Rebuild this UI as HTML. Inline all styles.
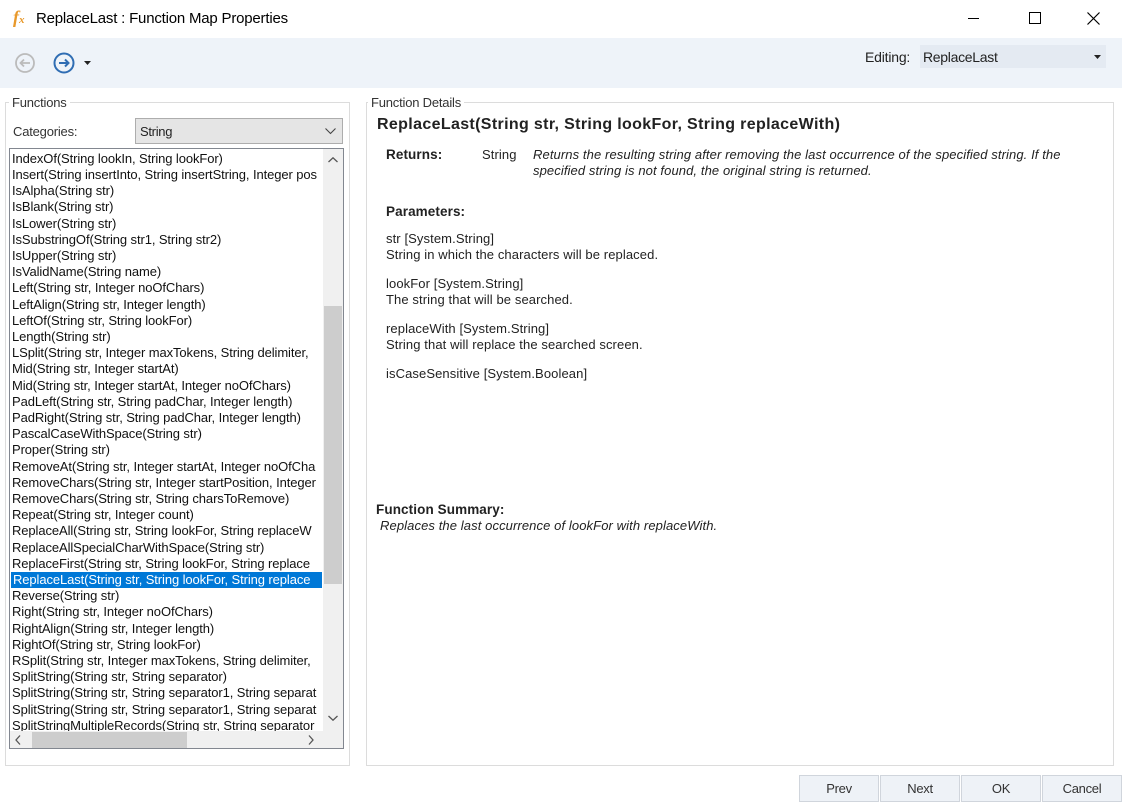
<!DOCTYPE html>
<html><head><style>
*{box-sizing:border-box;margin:0;padding:0}
body{width:1122px;height:802px;background:#fff;font-family:"Liberation Sans",sans-serif;color:#000;position:relative;overflow:hidden}
.a{position:absolute;white-space:nowrap}
.tb{left:0;top:38px;width:1122px;height:50px;background:#eef3f9}
.grp{border:1px solid #dcdcdc}
.lg{background:#fff;padding:0 3px;font-size:13px;color:#333;letter-spacing:-0.2px}
.list{left:9px;top:148px;width:335px;height:601px;border:1px solid #828790;background:#fff;overflow:hidden}
.it{position:absolute;left:2px;font-size:13px;letter-spacing:-0.1px;height:16px;line-height:16px;color:#111}
.sel{background:#0078d7;color:#fff;width:311px;padding-left:2px;left:1px;overflow:hidden}
.btn{top:775px;height:27px;width:80px;background:#eef2f7;border:1px solid #d0d5dc;font-size:13px;color:#333;text-align:center;line-height:26px;letter-spacing:-0.3px}
.d{font-size:13px;letter-spacing:0.1px;color:#222}
.it2{font-size:13px;font-style:italic;letter-spacing:0.1px;color:#222}
</style></head><body>
<div class="a" style="left:13px;top:7px;font-family:'Liberation Serif',serif;font-style:italic;font-weight:bold;color:#e8992b;font-size:18px">f<span style="font-size:11px">x</span></div>
<div class="a" style="left:36px;top:10px;font-size:15px;letter-spacing:-0.2px">ReplaceLast : Function Map Properties</div>
<div class="a" style="left:968px;top:18px;width:11px;height:1px;background:#000"></div>
<div class="a" style="left:1029px;top:12px;width:12px;height:12px;border:1px solid #000"></div>
<svg class="a" style="left:1087px;top:12px" width="13" height="13"><path d="M0.5 0.5L12.5 12.5M12.5 0.5L0.5 12.5" stroke="#000" stroke-width="1.2"/></svg>
<div class="a tb"></div>
<svg class="a" style="left:14px;top:52px" width="22" height="22"><circle cx="11" cy="11" r="9" fill="none" stroke="#bbb" stroke-width="1.8"/><path d="M16 11H6.5M10 7.5L6.5 11L10 14.5" fill="none" stroke="#bbb" stroke-width="1.8"/></svg>
<svg class="a" style="left:52px;top:51px" width="24" height="24"><circle cx="12" cy="12" r="9.5" fill="none" stroke="#2f6db3" stroke-width="2"/><path d="M7 12H16.5M13 8.5L16.5 12L13 15.5" fill="none" stroke="#2f6db3" stroke-width="2"/></svg>
<svg class="a" style="left:84px;top:61px" width="7" height="4"><path d="M0 0H7L3.5 4Z" fill="#222"/></svg>
<div class="a" style="left:865px;top:49px;font-size:14px;color:#222;letter-spacing:-0.2px">Editing:</div>
<div class="a" style="left:920px;top:45px;width:186px;height:23px;background:#e4eaf2"></div>
<div class="a" style="left:923px;top:49px;font-size:14px;color:#222;letter-spacing:-0.3px">ReplaceLast</div>
<svg class="a" style="left:1094px;top:55px" width="7" height="4"><path d="M0 0H7L3.5 4Z" fill="#222"/></svg>
<div class="a grp" style="left:5px;top:102px;width:345px;height:664px"></div>
<div class="a lg" style="left:9px;top:95px">Functions</div>
<div class="a" style="left:13px;top:124px;font-size:13px;color:#333;letter-spacing:-0.2px">Categories:</div>
<div class="a" style="left:135px;top:118px;width:208px;height:26px;background:#e5e5e5;border:1px solid #adadad"></div>
<div class="a" style="left:140px;top:124px;font-size:13px;color:#222;letter-spacing:-0.3px">String</div>
<svg class="a" style="left:325px;top:128px" width="11" height="7"><path d="M0.5 0.5L5.5 5.5L10.5 0.5" fill="none" stroke="#444" stroke-width="1.1"/></svg>
<div class="a list">
<div class="it" style="top:2px">IndexOf(String lookIn, String lookFor)</div>
<div class="it" style="top:18px">Insert(String insertInto, String insertString, Integer pos</div>
<div class="it" style="top:34px">IsAlpha(String str)</div>
<div class="it" style="top:50px">IsBlank(String str)</div>
<div class="it" style="top:67px">IsLower(String str)</div>
<div class="it" style="top:83px">IsSubstringOf(String str1, String str2)</div>
<div class="it" style="top:99px">IsUpper(String str)</div>
<div class="it" style="top:115px">IsValidName(String name)</div>
<div class="it" style="top:131px">Left(String str, Integer noOfChars)</div>
<div class="it" style="top:148px">LeftAlign(String str, Integer length)</div>
<div class="it" style="top:164px">LeftOf(String str, String lookFor)</div>
<div class="it" style="top:180px">Length(String str)</div>
<div class="it" style="top:196px">LSplit(String str, Integer maxTokens, String delimiter,</div>
<div class="it" style="top:212px">Mid(String str, Integer startAt)</div>
<div class="it" style="top:229px">Mid(String str, Integer startAt, Integer noOfChars)</div>
<div class="it" style="top:245px">PadLeft(String str, String padChar, Integer length)</div>
<div class="it" style="top:261px">PadRight(String str, String padChar, Integer length)</div>
<div class="it" style="top:277px">PascalCaseWithSpace(String str)</div>
<div class="it" style="top:293px">Proper(String str)</div>
<div class="it" style="top:310px">RemoveAt(String str, Integer startAt, Integer noOfCha</div>
<div class="it" style="top:326px">RemoveChars(String str, Integer startPosition, Integer</div>
<div class="it" style="top:342px">RemoveChars(String str, String charsToRemove)</div>
<div class="it" style="top:358px">Repeat(String str, Integer count)</div>
<div class="it" style="top:374px">ReplaceAll(String str, String lookFor, String replaceW</div>
<div class="it" style="top:391px">ReplaceAllSpecialCharWithSpace(String str)</div>
<div class="it" style="top:407px">ReplaceFirst(String str, String lookFor, String replace</div>
<div class="it sel" style="top:423px">ReplaceLast(String str, String lookFor, String replace</div>
<div class="it" style="top:439px">Reverse(String str)</div>
<div class="it" style="top:455px">Right(String str, Integer noOfChars)</div>
<div class="it" style="top:472px">RightAlign(String str, Integer length)</div>
<div class="it" style="top:488px">RightOf(String str, String lookFor)</div>
<div class="it" style="top:504px">RSplit(String str, Integer maxTokens, String delimiter,</div>
<div class="it" style="top:520px">SplitString(String str, String separator)</div>
<div class="it" style="top:536px">SplitString(String str, String separator1, String separat</div>
<div class="it" style="top:553px">SplitString(String str, String separator1, String separat</div>
<div class="it" style="top:569px">SplitStringMultipleRecords(String str, String separator</div>
<div class="a" style="left:313px;top:0;width:20px;height:582px;background:#f0f0f0"></div>
<div class="a" style="left:314px;top:157px;width:18px;height:278px;background:#cdcdcd"></div>
<svg class="a" style="left:318px;top:8px" width="10" height="6"><path d="M0.5 5L5 0.8L9.5 5" fill="none" stroke="#555" stroke-width="1.3"/></svg>
<svg class="a" style="left:318px;top:566px" width="10" height="6"><path d="M0.5 1L5 5.2L9.5 1" fill="none" stroke="#555" stroke-width="1.3"/></svg>
<div class="a" style="left:0;top:582px;width:333px;height:18px;background:#f0f0f0"></div>
<div class="a" style="left:22px;top:583px;width:155px;height:16px;background:#cdcdcd"></div>
<svg class="a" style="left:5px;top:586px" width="6" height="10"><path d="M5 0.5L1 5L5 9.5" fill="none" stroke="#555" stroke-width="1.3"/></svg>
<svg class="a" style="left:298px;top:586px" width="6" height="10"><path d="M1 0.5L5 5L1 9.5" fill="none" stroke="#555" stroke-width="1.3"/></svg>
</div>
<div class="a grp" style="left:366px;top:102px;width:748px;height:664px"></div>
<div class="a lg" style="left:368px;top:95px">Function Details</div>
<div class="a" style="left:377px;top:116px;font-size:16px;font-weight:bold;color:#222;letter-spacing:0.35px">ReplaceLast(String str, String lookFor, String replaceWith)</div>
<div class="a d" style="left:386px;top:147px;font-weight:bold;font-size:13.5px">Returns:</div>
<div class="a d" style="left:482px;top:147px">String</div>
<div class="a it2" style="left:533px;top:147px">Returns the resulting string after removing the last occurrence of the specified string. If the</div>
<div class="a it2" style="left:533px;top:163px">specified string is not found, the original string is returned.</div>
<div class="a d" style="left:386px;top:204px;font-weight:bold;font-size:13.5px">Parameters:</div>
<div class="a d" style="left:386px;top:231px">str [System.String]</div>
<div class="a d" style="left:386px;top:247px">String in which the characters will be replaced.</div>
<div class="a d" style="left:386px;top:276px">lookFor [System.String]</div>
<div class="a d" style="left:386px;top:292px">The string that will be searched.</div>
<div class="a d" style="left:386px;top:321px">replaceWith [System.String]</div>
<div class="a d" style="left:386px;top:337px">String that will replace the searched screen.</div>
<div class="a d" style="left:386px;top:366px">isCaseSensitive [System.Boolean]</div>
<div class="a d" style="left:376px;top:502px;font-weight:bold;font-size:13.5px">Function Summary:</div>
<div class="a it2" style="left:380px;top:518px">Replaces the last occurrence of lookFor with replaceWith.</div>
<div class="a btn" style="left:799px">Prev</div>
<div class="a btn" style="left:880px">Next</div>
<div class="a btn" style="left:961px">OK</div>
<div class="a btn" style="left:1042px">Cancel</div>
</body></html>
